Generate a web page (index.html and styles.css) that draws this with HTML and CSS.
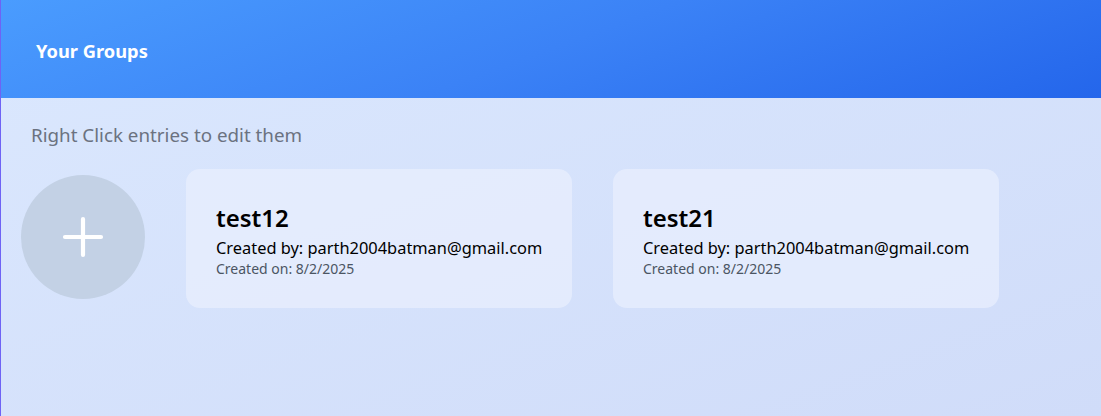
FILE: index.html
```html
<!DOCTYPE html>
<html>
<head>
<meta charset="utf-8">
<link rel="stylesheet" href="styles.css">
</head>
<body>
<div class="page">
  <header class="header">
    <h1 class="title">Your Groups</h1>
  </header>
  <main class="content">
    <p class="hint">Right Click entries to edit them</p>
    <div class="groups">
      <button class="add" aria-label="Add group">
        <svg width="44" height="44" viewBox="0 0 44 44"><path d="M22 4v36M4 22h36" stroke="#fff" stroke-width="4.2" stroke-linecap="round"/></svg>
      </button>
      <div class="card">
        <div class="card-name">test12</div>
        <div class="card-by">Created by: parth2004batman@gmail.com</div>
        <div class="card-on">Created on: 8/2/2025</div>
      </div>
      <div class="card">
        <div class="card-name">test21</div>
        <div class="card-by">Created by: parth2004batman@gmail.com</div>
        <div class="card-on">Created on: 8/2/2025</div>
      </div>
    </div>
  </main>
</div>
</body>
</html>
```
FILE: styles.css
```css
html, body {
  margin: 0;
  padding: 0;
  height: 100%;
}
body {
  font-family: "Noto Sans", "Open Sans", sans-serif;
  background: linear-gradient(160deg, #dbe8fe 0%, #d0dcf9 100%);
  border-left: 1px solid #6e63f5;
  box-sizing: border-box;
  overflow: hidden;
}
.page {
  min-height: 416px;
  display: flex;
  flex-direction: column;
}
.header {
  height: 98px;
  flex: none;
  display: flex;
  align-items: center;
  padding-left: 35px;
  background: linear-gradient(160deg, #4a9cfe 0%, #3b82f6 50%, #2466eb 100%);
}
.title {
  margin: 0;
  color: #fff;
  font-size: 18.3px;
  font-weight: 700;
  padding-top: 2px;
}
.content {
  padding: 0 20px;
}
.hint {
  margin: 24px 0 0 10px;
  font-size: 18.8px;
  color: #6b7280;
  line-height: 26px;
}
.groups {
  display: flex;
  align-items: flex-start;
  gap: 41px;
  margin-top: 21px;
}
.add {
  width: 124px;
  height: 124px;
  margin-top: 6px;
  border-radius: 50%;
  border: none;
  background: #c3d1e5;
  display: flex;
  align-items: center;
  justify-content: center;
  padding: 0;
  flex: none;
}
.card {
  width: 386px;
  height: 139px;
  flex: none;
  box-sizing: border-box;
  border-radius: 14px;
  background: rgba(234, 240, 254, 0.7);
  padding: 34px 24px 0 30px;
  color: #000;
  white-space: nowrap;
}
.card-name {
  font-size: 24px;
  font-weight: 600;
  line-height: 30px;
}
.card-by {
  font-size: 16.4px;
  line-height: 22px;
  margin-top: 4px;
}
.card-on {
  font-size: 14px;
  color: #4b5563;
  line-height: 19px;
}
```
